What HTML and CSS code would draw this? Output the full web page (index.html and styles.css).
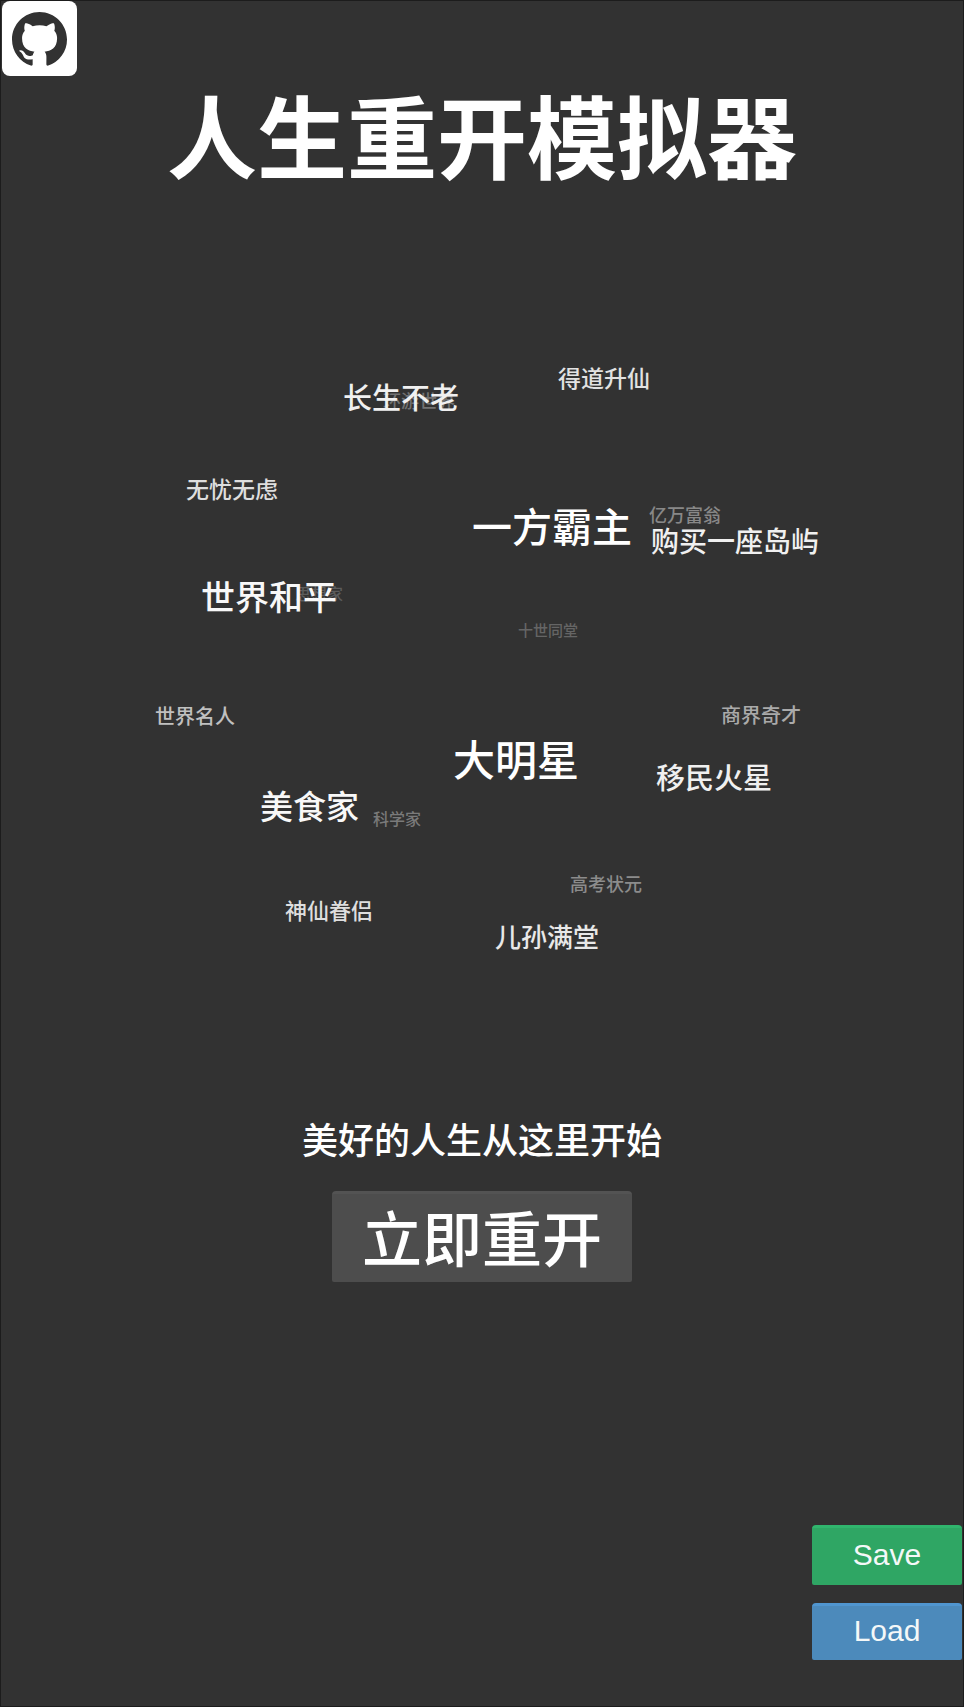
FILE: index.html
```html
<!DOCTYPE html>
<html lang="zh-CN">
<head>
<meta charset="utf-8">
<meta name="viewport" content="width=device-width, initial-scale=1">
<title>人生重开模拟器</title>
<link rel="stylesheet" href="styles.css">
</head>
<body>
<a class="github" href="#" aria-label="GitHub">
<svg viewBox="0 0 16 16" aria-hidden="true"><path d="M8 0C3.58 0 0 3.58 0 8c0 3.54 2.29 6.53 5.47 7.59.4.07.55-.17.55-.38 0-.19-.01-.82-.01-1.49-2.01.37-2.53-.49-2.69-.94-.09-.23-.48-.94-.82-1.13-.28-.15-.68-.52-.01-.53.63-.01 1.08.58 1.23.82.72 1.21 1.87.87 2.33.66.07-.52.28-.87.51-1.07-1.78-.2-3.64-.89-3.64-3.95 0-.87.31-1.59.82-2.15-.08-.2-.36-1.02.08-2.12 0 0 .67-.21 2.2.82.64-.18 1.32-.27 2-.27s1.36.09 2 .27c1.53-1.04 2.2-.82 2.2-.82.44 1.1.16 1.92.08 2.12.51.56.82 1.27.82 2.15 0 3.07-1.87 3.75-3.65 3.95.29.25.54.73.54 1.48 0 1.07-.01 1.93-.01 2.2 0 .21.15.46.55.38A8.01 8.01 0 0 0 16 8c0-4.42-3.58-8-8-8z"/></svg>
</a>
<main class="page">
<h1 class="title">人生重开模拟器</h1>
<div class="cloud">
<span class="word w-travel">环游世界</span>
<span class="word w-immortal">长生不老</span>
<span class="word w-ascend">得道升仙</span>
<span class="word w-carefree">无忧无虑</span>
<span class="word w-thinker">思想家</span>
<span class="word w-peace">世界和平</span>
<span class="word w-lord">一方霸主</span>
<span class="word w-rich">亿万富翁</span>
<span class="word w-island">购买一座岛屿</span>
<span class="word w-clan">十世同堂</span>
<span class="word w-famous">世界名人</span>
<span class="word w-gourmet">美食家</span>
<span class="word w-science">科学家</span>
<span class="word w-couple">神仙眷侣</span>
<span class="word w-star">大明星</span>
<span class="word w-business">商界奇才</span>
<span class="word w-mars">移民火星</span>
<span class="word w-exam">高考状元</span>
<span class="word w-family">儿孙满堂</span>
</div>
<p class="slogan">美好的人生从这里开始</p>
<button class="start" type="button">立即重开</button>
<div class="storage">
<button class="btn save" type="button">Save</button>
<button class="btn load" type="button">Load</button>
</div>
</main>
</body>
</html>
```
FILE: styles.css
```css
* { box-sizing: border-box; }
body {
  margin: 0;
  background: #323232;
  color: #fff;
  font-family: "Noto Sans CJK SC", sans-serif;
  font-weight: 500;
}
.page {
  min-height: 100vh;
  display: flex;
  flex-direction: column;
  align-items: center;
  padding: 67px 0 46px;
  border: 1px solid #1c1c1c;
}
.github {
  position: absolute;
  top: 1px;
  left: 2px;
  width: 75px;
  height: 75px;
  padding: 11px 10px 9px;
  border-radius: 8px;
  background: #fff;
}
.github svg { display: block; width: 55px; height: 55px; fill: #323232; }
.title {
  margin: 0;
  font-size: 90px;
  line-height: 130px;
  font-weight: 700;
}
/* Words float freely; coordinates are measured from the canvas corner. */
.cloud {
  position: relative;
  width: 700px;
  max-width: 100%;
  height: 700px;
  margin-top: 90px;
}
.word {
  position: absolute;
  line-height: 40px;
  white-space: nowrap;
}
.w-travel { left: 251px; top: 92px; font-size: 18px; color: #727272; }
.w-immortal { left: 211px; top: 88px; font-size: 29px; color: #f0f0f0; }
.w-ascend { left: 426px; top: 69px; font-size: 23px; color: #e2e2e2; }
.w-carefree { left: 54px; top: 180px; font-size: 23px; color: #dedede; }
.w-thinker { left: 163px; top: 285px; font-size: 16px; color: #5c5c5c; }
.w-peace { left: 69px; top: 288px; font-size: 34px; color: #f8f8f8; }
.w-lord { left: 340px; top: 217px; font-size: 40px; }
.w-rich { left: 517px; top: 206px; font-size: 18px; color: #888; }
.w-island { left: 519px; top: 232px; font-size: 28px; color: #f0f0f0; }
.w-clan { left: 386px; top: 322px; font-size: 15px; color: #656565; }
.w-famous { left: 23px; top: 408px; font-size: 20px; color: #c0c0c0; }
.w-gourmet { left: 128px; top: 497px; font-size: 33px; color: #f8f8f8; }
.w-science { left: 241px; top: 510px; font-size: 16px; color: #7a7a7a; }
.w-couple { left: 153px; top: 601px; font-size: 22px; color: #dedede; }
.w-star { left: 321px; top: 450px; font-size: 42px; }
.w-business { left: 589px; top: 407px; font-size: 20px; color: #aaa; }
.w-mars { left: 524px; top: 468px; font-size: 29px; color: #f0f0f0; }
.w-exam { left: 438px; top: 575px; font-size: 18px; color: #8c8c8c; }
.w-family { left: 363px; top: 628px; font-size: 26px; color: #e8e8e8; }
.slogan {
  margin: 124px 0 0;
  font-size: 36px;
  line-height: 52px;
}
.start {
  width: 300px;
  height: 91px;
  margin-top: 27px;
  padding: 0 0 4px;
  border: 0;
  border-top: 3px solid #535353;
  border-radius: 4px 4px 2px 2px;
  background: #4d4d4d;
  color: #fff;
  font: 500 60px/84px "Noto Sans CJK SC", sans-serif;
}
.storage {
  display: flex;
  flex-direction: column;
  gap: 18px;
  align-self: flex-end;
  margin-top: auto;
  margin-right: 1px;
}
.btn {
  width: 150px;
  height: 60px;
  padding: 0 0 4px;
  border: 0;
  border-top: 3px solid;
  border-radius: 4px 4px 2px 2px;
  color: #f4f8f8;
  font: 30px/50px "Liberation Sans", Arial, sans-serif;
}
.save { background: #2fa664; border-color: #30b56d; }
.load { height: 57px; background: #4c8abb; border-color: #5096d0; }
```
